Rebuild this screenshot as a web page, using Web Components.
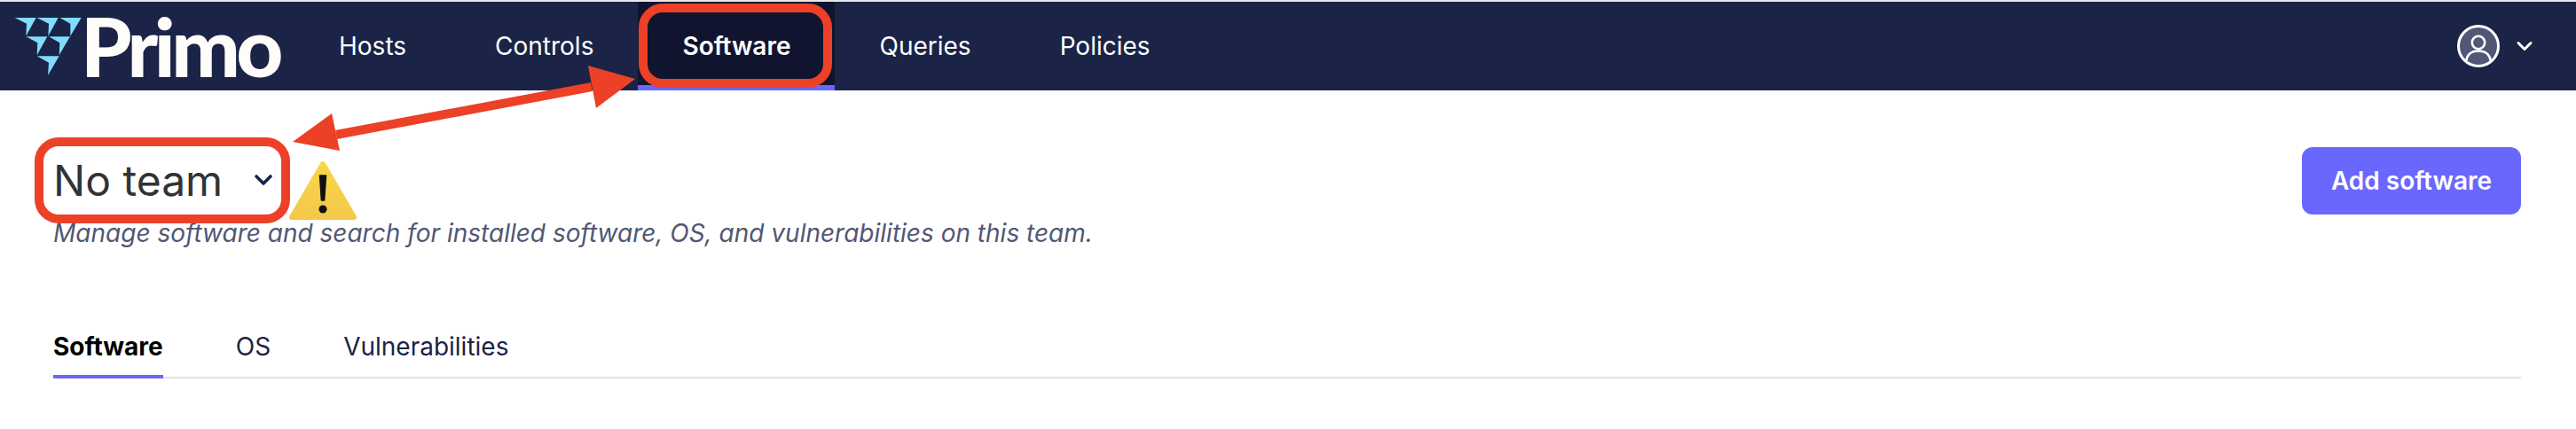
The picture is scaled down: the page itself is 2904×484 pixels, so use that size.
<!DOCTYPE html>
<html><head><meta charset="utf-8"><style>
html,body{margin:0;padding:0;background:#fff;width:2904px;height:484px;overflow:hidden;font-family:Inter,"Liberation Sans",sans-serif}
</style></head><body>
<app-shell></app-shell>
<script>
const def=(name,html)=>customElements.define(name,class extends HTMLElement{constructor(){super();this.attachShadow({mode:'open'}).innerHTML=html}});
def('primo-logo',`<style>:host{display:flex;align-items:center;margin-left:10px;width:322px}
span{font:900 92px/100px Lato,sans-serif;color:#fffdfa;letter-spacing:-4.5px;display:block;margin-left:-9px}svg{display:block;flex:none}</style>
<svg width="90" height="76" viewBox="0 0 270 228" fill="#80dcfe">
<path d="M20 18H92L58 80 60 38Z"/><path d="M95 18H167L133 80 135 38Z"/><path d="M172 18H245L208 80 208 38Z"/>
<path d="M58 82H130L95 145 97 103Z"/><path d="M135 82H207L170 145 172 103Z"/><path d="M95 148H170L132 213 135 170Z"/>
</svg><span>Primo</span>`);
def('nav-tab',`<style>:host{display:flex;align-items:center;justify-content:center;height:100px;box-sizing:border-box;font-size:28px;font-weight:400;color:#fff;padding:0 50px}
:host([active]){background:#10142f;font-weight:600;box-shadow:inset 0 -6px 0 #6a67fe}</style><slot></slot>`);
def('user-menu',`<style>:host{display:flex;align-items:center;gap:18px;margin-right:48px}svg{display:block}</style>
<svg width="48" height="48" viewBox="0 0 48 48"><circle cx="24" cy="24" r="22.5" fill="#515774" stroke="#fff" stroke-width="3"/><circle cx="24" cy="20" r="7.2" fill="none" stroke="#fff" stroke-width="2.6"/><path d="M10 42C11 33 17 29.5 24 29.5S37 33 38 42" fill="none" stroke="#fff" stroke-width="2.6"/></svg>
<svg width="20" height="14" viewBox="0 0 20 14"><path d="M3 3.5 10 10.5 17 3.5" fill="none" stroke="#fff" stroke-width="3" stroke-linecap="round" stroke-linejoin="round"/></svg>`);
def('top-nav',`<style>:host{display:flex;align-items:center;height:100px;background:#1b2346;border-top:2px solid #e8e8e8}
.tabs{display:flex;align-items:center}.sp{flex:1}</style>
<primo-logo></primo-logo><div class="tabs"><slot></slot></div><div class="sp"></div><user-menu></user-menu>`);
def('team-select',`<style>:host{display:flex;align-items:center;justify-content:space-between;width:249px;font-size:48px;color:#333;line-height:58px}svg{display:block;margin-top:-2px}</style><span>No team</span>
<svg width="24" height="16" viewBox="0 0 24 16"><path d="M4 4 12 12 20 4" fill="none" stroke="#1b2346" stroke-width="3.6" stroke-linecap="round" stroke-linejoin="round"/></svg>`);
def('warn-icon',`<style>:host{display:block;line-height:0;margin-bottom:-1px}</style><svg width="78" height="68" viewBox="0 0 78 68"><defs><linearGradient id="g" x1="0" y1="0" x2="0" y2="1"><stop offset="0" stop-color="#f8d648"/><stop offset="1" stop-color="#f5c84a"/></linearGradient></defs><path d="M39 4 74 64H4Z" fill="url(#g)" stroke="url(#g)" stroke-width="6" stroke-linejoin="round"/><path d="M35.5 17H42.5L40.6 45H37.4Z" fill="#111" stroke="#111" stroke-width="1.5" stroke-linejoin="round"/><circle cx="39" cy="55" r="4.5" fill="#111"/></svg>`);
def('page-head',`<style>:host{display:flex;justify-content:space-between;padding:0 62px 0 60px}
.l{display:flex;flex-direction:column}.t{display:flex;align-items:flex-end;gap:16px;height:146px;box-sizing:border-box}
team-select{margin-bottom:15px}
p{margin:0;font-size:28px;font-style:italic;color:#515774;line-height:30px}
.r{padding-top:64px}</style>
<div class="l"><div class="t"><team-select></team-select><warn-icon></warn-icon></div><p>Manage software and search for installed software, OS, and vulnerabilities on this team.</p></div><div class="r"><slot></slot></div>`);
def('add-button',`<style>:host{display:flex;align-items:center;justify-content:center;width:247px;height:76px;border-radius:12px;background:#6a67fe;color:#fff;font-size:28px;font-weight:600}</style><slot></slot>`);
def('sub-tab',`<style>:host{display:block;font-size:28px;line-height:32px;color:#1b2346;margin-bottom:-2px;border-bottom:4px solid transparent}
:host([active]){font-weight:700;color:#000;border-bottom-color:#6a67fe}</style><slot></slot>`);
def('sub-tabs',`<style>:host{display:flex;gap:82px;margin:97px 62px 0 60px;border-bottom:2px solid #e2e2e2;height:50px}</style><slot></slot>`);
def('anno-layer',`<style>:host{position:absolute;left:0;top:0;width:2904px;height:484px;pointer-events:none}svg{position:absolute;left:0;top:0}</style>
<svg width="2904" height="484" viewBox="0 0 2904 484"><g fill="none" stroke="#ec4127" stroke-width="10">
<rect x="725" y="9" width="208" height="85" rx="22"/>
<rect x="44" y="160" width="278" height="87" rx="22"/></g>
<path d="M379 152 667 98" stroke="#ec4127" stroke-width="10"/>
<path d="M330 160 374 128 383 170Z M716 89 663 74 672 122Z" fill="#ec4127"/></svg>`);
def('app-shell',`<style>:host{display:block;position:relative;width:2904px;height:484px}</style>
<top-nav><nav-tab>Hosts</nav-tab><nav-tab>Controls</nav-tab><nav-tab active>Software</nav-tab><nav-tab>Queries</nav-tab><nav-tab>Policies</nav-tab></top-nav>
<page-head><add-button>Add software</add-button></page-head>
<sub-tabs><sub-tab active>Software</sub-tab><sub-tab>OS</sub-tab><sub-tab>Vulnerabilities</sub-tab></sub-tabs>
<anno-layer></anno-layer>`);
</script></body></html>
